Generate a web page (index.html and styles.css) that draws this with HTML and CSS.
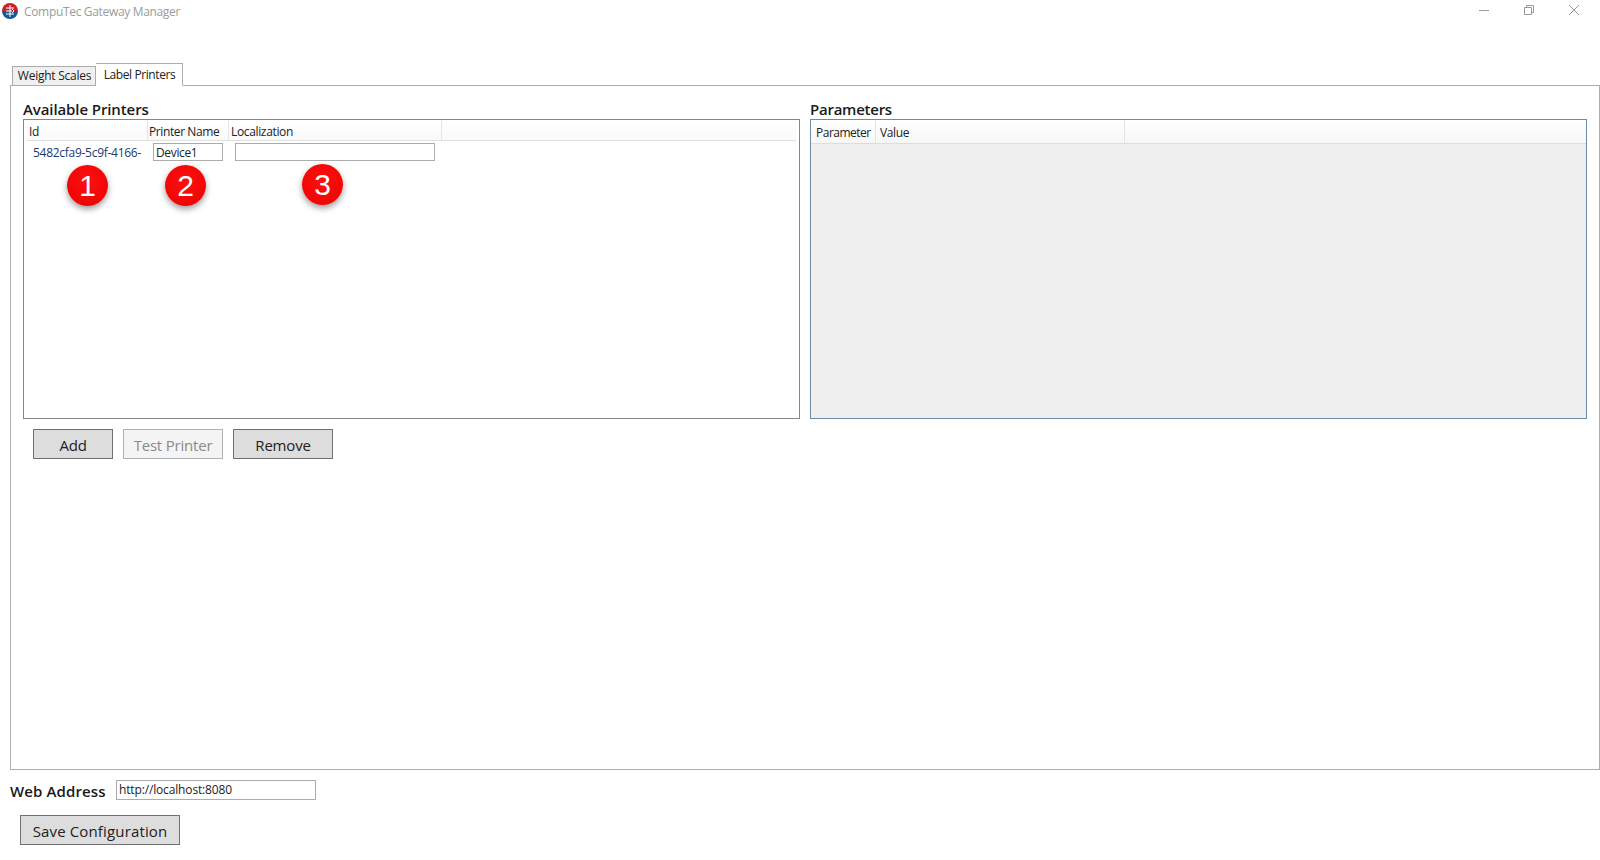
FILE: index.html
```html
<!DOCTYPE html>
<html lang="en">
<head>
<meta charset="utf-8">
<title>CompuTec Gateway Manager</title>
<link rel="stylesheet" href="styles.css">
</head>
<body>
<div class="window">
  <header class="titlebar">
    <div class="app-title">
      <svg class="app-icon" width="18" height="18" viewBox="0 0 18 18">
        <path d="M1 9a8 8 0 0 1 16 0z" fill="#c8202c"/>
        <path d="M1 9a8 8 0 0 0 16 0z" fill="#14598f"/>
        <path d="M5 6h8M5 12h8M9 3v12M5 9h6M11 7l2 2-2 2" fill="none" stroke="#fff" stroke-width="1"/>
      </svg>
      <span>CompuTec Gateway Manager</span>
    </div>
    <div class="win-controls">
      <svg width="12" height="12" viewBox="0 0 12 12"><path d="M1 6.500h10" stroke="#9a9a9a" fill="none"/></svg>
      <svg width="12" height="12" viewBox="0 0 12 12"><path d="M1.500 3.500h7v7h-7zM3.500 3.500v-2h7v7h-2" stroke="#9a9a9a" fill="none"/></svg>
      <svg width="12" height="12" viewBox="0 0 12 12"><path d="M1 1l10 10M11 1L1 11" stroke="#9a9a9a" fill="none"/></svg>
    </div>
  </header>

  <nav class="tabs">
    <div class="tab">Weight Scales</div>
    <div class="tab tab-active">Label Printers</div>
  </nav>

  <main class="tab-panel">
    <div class="panes">
      <section class="pane">
        <h2 class="pane-title">Available Printers</h2>
        <div class="list">
          <div class="list-head">
            <div class="col col-id">Id</div>
            <div class="col col-name">Printer Name</div>
            <div class="col col-loc">Localization</div>
          </div>
          <div class="list-row">
            <div class="cell-id">5482cfa9-5c9f-4166-</div>
            <div class="field field-name">Device1</div>
            <div class="field field-loc"></div>
          </div>
          <span class="badge badge-1">1</span>
          <span class="badge badge-2">2</span>
          <span class="badge badge-3">3</span>
        </div>
      </section>
      <section class="pane">
        <h2 class="pane-title pane-title-params">Parameters</h2>
        <div class="list list-params">
          <div class="params-head">
            <div class="col col-param">Parameter</div>
            <div class="col col-value">Value</div>
          </div>
        </div>
      </section>
    </div>
    <div class="actions">
      <button class="btn btn-add" type="button">Add</button>
      <button class="btn btn-test" type="button">Test Printer</button>
      <button class="btn btn-remove" type="button">Remove</button>
    </div>
  </main>

  <div class="address">
    <span class="address-label">Web Address</span>
    <div class="field field-address">http://localhost:8080</div>
  </div>
  <div class="save">
    <button class="btn btn-save" type="button">Save Configuration</button>
  </div>
</div>
</body>
</html>
```

FILE: styles.css
```css
* { box-sizing: border-box; }
html, body { margin: 0; height: 100%; background: #fff; }
body { overflow: hidden; font-family: "Open Sans", "Noto Sans", sans-serif; color: #222; }
.window { width: 1600px; height: 860px; display: flex; flex-direction: column; }

.titlebar { height: 64px; display: flex; justify-content: space-between; align-items: flex-start; flex: none; }
.app-title { display: flex; align-items: flex-start; gap: 5px; padding: 2px 0 0 1px; font-size: 12px; color: #9b9b9b; line-height: 20px; letter-spacing: -0.33px; }
.app-icon { flex: none; }
.win-controls { display: flex; gap: 33px; padding: 4px 20px 0 0; }

.tabs { height: 22px; display: flex; align-items: flex-end; padding-left: 12px; flex: none; position: relative; z-index: 1; margin-bottom: -1px; }
.tab { width: 84px; height: 20px; font-size: 12px; line-height: 18px; text-align: center; letter-spacing: -0.25px; padding-left: 1px; background: #f0f0f0; border: 1px solid #acacac; }
.tab-active { width: 87px; height: 23px; background: #fff; border-left-width: 0; border-bottom-color: #fff; line-height: 21px; letter-spacing: -0.4px; }

.tab-panel { width: 1590px; height: 685px; margin-left: 10px; border: 1px solid #acacac; padding: 14px 0 0 12px; flex: none; }
.panes { display: flex; gap: 10px; width: 1564px; }
.pane { width: 777px; flex: none; }
.pane-title { margin: 0; font-size: 15px; line-height: 19px; font-weight: 600; color: #1a1a1a; letter-spacing: -0.1px; }
.pane-title-params { letter-spacing: -0.25px; }
.list { position: relative; height: 300px; border: 1px solid #828790; padding: 0 3px; background: #fff; }

.list-head { display: flex; height: 21px; border-bottom: 1px solid #e0e0e0; font-size: 12px; background: linear-gradient(#fff, #fafafa); }
.col { height: 100%; border-right: 1px solid #e5e5e5; padding-left: 2px; line-height: 23px; letter-spacing: -0.35px; white-space: nowrap; overflow: hidden; }
.col-id { width: 121px; }
.col-name { width: 81px; padding-left: 1px; letter-spacing: -0.4px; }
.col-loc { width: 213px; padding-left: 2px; }

.list-row { display: flex; align-items: center; padding: 2px 0 0 6px; }
.cell-id { width: 120px; font-size: 12px; color: #1c3a70; letter-spacing: -0.28px; white-space: nowrap; }
.field { height: 18px; border: 1px solid #acacac; font-size: 12px; line-height: 17px; padding-left: 2px; letter-spacing: -0.35px; background: #fff; }
.field-name { width: 70px; }
.field-loc { width: 200px; margin-left: 12px; }

.badge { position: absolute; top: 45px; width: 41px; height: 41px; border-radius: 50%; background: radial-gradient(circle at 50% 40%, #ff1010, #ea0000); box-shadow: 0 3px 6px rgba(0, 0, 0, 0.4); color: #fff; font-family: "Liberation Sans", sans-serif; font-size: 30px; line-height: 41px; text-align: center; }
.badge-1 { left: 43px; }
.badge-2 { left: 141px; }
.badge-3 { left: 278px; top: 44px; }

.list-params { background: #efefef; border-color: #6d8ba3; padding: 0; }
.params-head { display: flex; height: 24px; border-bottom: 1px solid #dcdcdc; background: linear-gradient(#fff, #f7f7f7); font-size: 12px; }
.params-head .col { line-height: 26px; }
.col-param { width: 65px; padding-left: 5px; letter-spacing: -0.5px; }
.col-value { width: 249px; padding-left: 4px; }

.actions { display: flex; gap: 10px; padding: 10px 0 0 10px; }
.btn { height: 30px; border: 1px solid #707070; background: #ddd; color: #222; font-family: inherit; font-size: 15px; padding: 2px 0 0; letter-spacing: -0.2px; }
.btn-add { width: 80px; }
.btn-test { width: 100px; border-color: #adb2b5; background: #f4f4f4; color: #8a8a8a; }
.btn-remove { width: 100px; }

.address { display: flex; align-items: center; gap: 11px; height: 20px; margin: 10px 0 0 10px; flex: none; }
.address-label { width: 95px; flex: none; font-size: 15px; font-weight: 600; color: #1a1a1a; letter-spacing: 0.12px; padding-top: 1px; white-space: nowrap; }
.field-address { width: 200px; height: 20px; line-height: 17px; letter-spacing: -0.15px; }

.save { padding: 15px 0 0 20px; flex: none; }
.btn-save { width: 160px; letter-spacing: 0.15px; }
```
